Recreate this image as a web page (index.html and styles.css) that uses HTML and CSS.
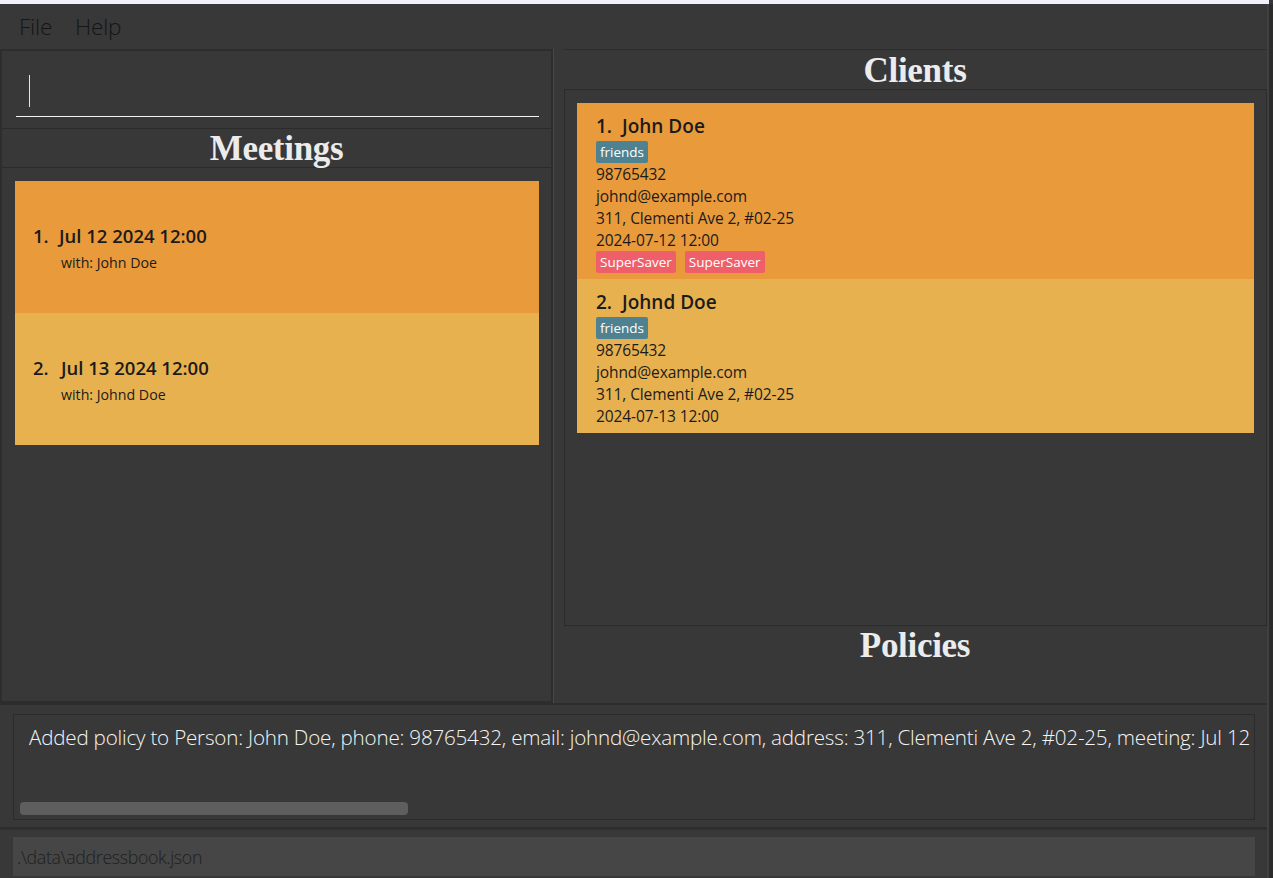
FILE: index.html
```html
<!DOCTYPE html>
<html>
<head>
<meta charset="utf-8">
<link rel="stylesheet" href="styles.css">
</head>
<body>
<div class="titlestrip"></div>
<div class="app">
  <div class="window">
    <div class="menubar">
      <span class="menu-item">File</span>
      <span class="menu-item">Help</span>
    </div>
    <div class="main">
      <div class="pane-left">
        <div class="command">
          <div class="command-field"><span class="caret"></span></div>
        </div>
        <div class="header">Meetings</div>
        <div class="list list-meetings">
          <div class="mcard odd">
            <div class="mtitle"><span class="idx">1.</span>Jul 12 2024 12:00</div>
            <div class="mwith">with: John Doe</div>
          </div>
          <div class="mcard even">
            <div class="mtitle"><span class="idx">2.</span>Jul 13 2024 12:00</div>
            <div class="mwith">with: Johnd Doe</div>
          </div>
        </div>
      </div>
      <div class="divider"></div>
      <div class="pane-right">
        <div class="header header-clients">Clients</div>
        <div class="list list-clients">
          <div class="ccard odd">
            <div class="ctitle"><span class="idx">1.</span>John Doe</div>
            <div class="tags"><span class="tag tag-blue">friends</span></div>
            <div class="cline">98765432</div>
            <div class="cline">johnd@example.com</div>
            <div class="cline">311, Clementi Ave 2, #02-25</div>
            <div class="cline">2024-07-12 12:00</div>
            <div class="tags"><span class="tag tag-red">SuperSaver</span><span class="tag tag-red">SuperSaver</span></div>
          </div>
          <div class="ccard even">
            <div class="ctitle"><span class="idx">2.</span>Johnd Doe</div>
            <div class="tags"><span class="tag tag-blue">friends</span></div>
            <div class="cline">98765432</div>
            <div class="cline">johnd@example.com</div>
            <div class="cline">311, Clementi Ave 2, #02-25</div>
            <div class="cline">2024-07-13 12:00</div>
          </div>
        </div>
        <div class="header header-policies">Policies</div>
        <div class="policies-body"></div>
      </div>
    </div>
    <div class="result">
      <div class="result-box">
        <div class="result-text">Added policy to Person: John Doe, phone: 98765432, email: johnd@example.com, address: 311, Clementi Ave 2, #02-25, meeting: Jul 12</div>
        <div class="hscroll"><div class="hthumb"></div></div>
      </div>
    </div>
    <div class="status">
      <div class="status-box">.\data\addressbook.json</div>
    </div>
  </div>
  <div class="edge"></div>
</div>
</body>
</html>
```

FILE: styles.css
```css
* { box-sizing: border-box; }
html, body { margin: 0; padding: 0; }
body {
  width: 1273px;
  height: 878px;
  overflow: hidden;
  background: #383838;
  font-family: "Open Sans", "Noto Sans", sans-serif;
}
.titlestrip {
  height: 4px;
  background: #f1f1fb;
  margin-right: 4px;
}
.app {
  display: flex;
  height: 874px;
}
.window {
  width: 1267px;
  display: flex;
  flex-direction: column;
}
.edge {
  width: 6px;
  background: #2c2c2c;
  border-left: 2px solid #3f3f3f;
}
.menubar {
  height: 45px;
  display: flex;
  align-items: center;
  padding-left: 19px;
  gap: 23px;
  background: #383838;
}
.menu-item {
  font-family: "Open Sans", sans-serif;
  font-weight: 300;
  font-size: 22.5px;
  color: #151515;
  letter-spacing: -0.2px;
}
.main {
  display: flex;
  height: 654px;
}
.pane-left {
  width: 553px;
  display: flex;
  flex-direction: column;
  border: 2px solid #2d2d2d;
}
.divider {
  width: 10px;
  border-left: 1px solid #474747;
  background: #383838;
}
.pane-right {
  flex: 1;
  display: flex;
  flex-direction: column;
  border-top: 1px solid #2d2d2d;
}
.command {
  height: 77px;
  padding: 22px 12px 0 14px;
}
.command-field {
  height: 42px;
  border-bottom: 1px solid #f2f2f2;
  padding-left: 13px;
}
.caret {
  display: block;
  width: 1px;
  height: 32px;
  margin-top: 2px;
  background: #e6e6e6;
}
.header {
  height: 40px;
  text-align: center;
  font-family: "Liberation Serif", "Times New Roman", serif;
  font-weight: bold;
  font-size: 35px;
  line-height: 40px;
  color: #ececec;
  letter-spacing: -0.3px;
  border-top: 1px solid #2b2b2b;
  border-bottom: 1px solid #2b2b2b;
}
.header-clients {
  height: 39px;
  border-top: none;
  line-height: 42px;
  border-bottom: none;
}
.list {
  flex: 1;
}
.list-meetings {
  padding: 13px 12px 0 13px;
}
.mcard {
  height: 132px;
  padding: 43px 0 0 18px;
  color: #1b1b1b;
}
.odd { background: #e99a3b; }
.even { background: #e7b150; }
.mtitle {
  font-weight: 600;
  font-size: 18.5px;
  line-height: 24px;
}
.idx {
  display: inline-block;
  width: 26px;
}
.mcard.even .idx { width: 28px; }
.mwith {
  font-size: 14.2px;
  line-height: 20px;
  margin-top: 5px;
  padding-left: 28px;
}
.list-clients {
  flex: none;
  height: 537px;
  border: 1px solid #2b2b2b;
  margin-left: 1px;
  padding: 13px 12px 0 12px;
}
.ccard {
  padding: 10px 0 0 19px;
  color: #1b1b1b;
}
.ccard.odd { height: 176px; }
.ccard.even { height: 154px; padding-top: 10px; }
.ctitle {
  font-weight: 600;
  font-size: 19px;
  line-height: 26px;
  margin-bottom: 2px;
}
.ctitle .idx { width: 26px; }
.cline {
  font-size: 15.5px;
  line-height: 22px;
  letter-spacing: -0.1px;
}
.tags {
  display: flex;
  gap: 9px;
  height: 22px;
  align-items: stretch;
}
.tag {
  display: block;
  height: 22px;
  line-height: 22px;
  padding: 0 4px;
  border-radius: 2px;
  font-size: 13.5px;
  color: #ffffff;
}
.tag-blue { background: #4e8290; }
.tag-red { background: #ef5f6a; }
.header-policies {
  height: 38px;
  border-top: none;
  border-bottom: none;
  line-height: 40px;
}
.policies-body { flex: 1; }
.result {
  height: 125px;
  padding: 9px 12px 7px 13px;
  border-top: 2px solid #2d2d2d;
  border-bottom: 1px solid #2d2d2d;
}
.result-box {
  height: 100%;
  border: 1px solid #2b2b2b;
  position: relative;
  overflow: hidden;
}
.result-text {
  position: absolute;
  left: 15px;
  top: 8px;
  white-space: nowrap;
  font-family: "Open Sans", sans-serif;
  font-weight: 300;
  font-size: 20.6px;
  color: #f5f5f5;
  letter-spacing: -0.2px;
}
.hscroll {
  position: absolute;
  left: 6px;
  right: 6px;
  bottom: 4px;
  height: 13px;
}
.hthumb {
  width: 388px;
  height: 100%;
  border-radius: 4px;
  background: #5e5e5e;
}
.status {
  flex: 1;
  padding: 7px 12px 2px 13px;
  border-top: 2px solid #2f2f2f;
}
.status-box {
  height: 39px;
  background: #464646;
  padding-left: 4px;
  font-family: "Open Sans", sans-serif;
  font-weight: 300;
  font-size: 17.8px;
  line-height: 40px;
  color: #1f1f1f;
  letter-spacing: -0.35px;
}
```
